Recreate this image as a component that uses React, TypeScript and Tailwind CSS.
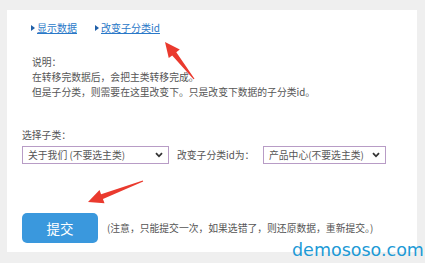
import React from "react";

const cjk = { fontFamily: '"Noto Sans CJK SC", "Liberation Sans", sans-serif' };

type Pt = [number, number];

// tapered arrow from tail to tip, drawn as one polygon
const arrowPoints = (tail: Pt, tip: Pt, head = 15, hw = 7, sw = 2.6) => {
  const dx = tip[0] - tail[0];
  const dy = tip[1] - tail[1];
  const len = Math.hypot(dx, dy);
  const ux = dx / len;
  const uy = dy / len;
  const nx = -uy;
  const ny = ux;
  const bx = tip[0] - ux * head;
  const by = tip[1] - uy * head;
  const pts: Pt[] = [
    [tail[0] + nx * 0.6, tail[1] + ny * 0.6],
    [bx + nx * sw, by + ny * sw],
    [bx + nx * hw, by + ny * hw],
    tip,
    [bx - nx * hw, by - ny * hw],
    [bx - nx * sw, by - ny * sw],
    [tail[0] - nx * 0.6, tail[1] - ny * 0.6],
  ];
  return pts.map((p) => p.join(",")).join(" ");
};

const Chevron = () => (
  <svg width="8" height="6" viewBox="0 0 8 6">
    <path d="M1 1.2 L4 4.3 L7 1.2" fill="none" stroke="#333" strokeWidth="1.8" />
  </svg>
);

const FakeSelect = ({ label, width }: { label: string; width: string }) => (
  <div
    className={`${width} h-[18px] border border-[#b89cc6] bg-white flex items-center justify-between pl-[5px] pr-[5px] text-[#555]`}
  >
    <span>{label}</span>
    <Chevron />
  </div>
);

const Tri = () => <span className="inline-block w-0 h-0 border-y-[3px] border-y-transparent border-l-[4px] border-l-[#1f5fa8] mr-[2px]" />;

export default function App() {
  return (
    <div className="relative w-[425px] h-[263px] bg-[#efefef] overflow-hidden text-[9.8px] leading-[15px]" style={cjk}>
      <div className="ml-[7px] pt-[10px]">
        <div className="w-[410px] h-[242px] bg-white pt-[10px] text-[#555]">
          <div className="flex items-center pl-[24px] gap-[18px] text-[10px]">
            <a className="flex items-center text-[#2a78c8] underline">
              <Tri />
              显示数据
            </a>
            <a className="flex items-center text-[#2a78c8] underline">
              <Tri />
              改变子分类id
            </a>
          </div>

          <div className="pl-[25px] mt-[20px]">
            <p>说明：</p>
            <p>在转移完数据后，会把主类转移完成。</p>
            <p>但是子分类，则需要在这里改变下。只是改变下数据的子分类id。</p>
          </div>

          <div className="pl-[15px] mt-[28px]">
            <p>选择子类：</p>
            <div className="flex items-center mt-[3px]">
              <FakeSelect label="关于我们 (不要选主类)" width="w-[147px]" />
              <span className="ml-[8px] w-[86px]">改变子分类id为：</span>
              <FakeSelect label="产品中心(不要选主类)" width="w-[123px]" />
            </div>
            <div className="flex items-center mt-[49px]">
              <button className="w-[76px] h-[30px] rounded-[5px] bg-[#3a98dd] text-white text-[13.5px]">提交</button>
              <span className="ml-[9px]">(注意，只能提交一次，如果选错了，则还原数据，重新提交。)</span>
            </div>
          </div>
        </div>
      </div>

      <svg className="absolute left-0 top-0 pointer-events-none" width="425" height="263">
        <polygon points={arrowPoints([194, 79], [165, 42])} fill="#ea3a2e" />
        <polygon points={arrowPoints([143, 181], [88, 202])} fill="#ea3a2e" />
      </svg>

      <span
        className="absolute left-[292px] top-[239px] text-[#1d9ad6] text-[17.5px] leading-[22px]"
        style={{ fontFamily: '"DejaVu Sans", sans-serif' }}
      >
        demososo.com
      </span>
    </div>
  );
}
